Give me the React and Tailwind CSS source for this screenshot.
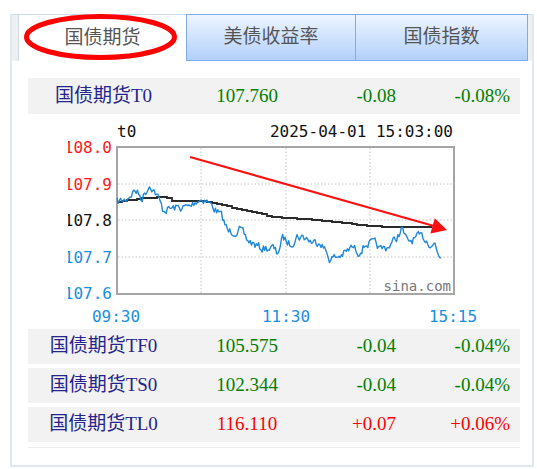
import React from 'react';

const quotes = [
  { name: '国债期货TF0', price: '105.575', change: '-0.04', pct: '-0.04%', up: false },
  { name: '国债期货TS0', price: '102.344', change: '-0.04', pct: '-0.04%', up: false },
  { name: '国债期货TL0', price: '116.110', change: '+0.07', pct: '+0.06%', up: true },
];

const priceKeys = [
  [117, 202], [125, 200], [135, 190], [142, 198], [150, 184], [157, 195], [163, 210],
  [175, 208], [190, 207], [197, 200], [205, 199], [213, 207], [222, 217], [228, 232],
  [240, 230], [247, 240], [260, 248], [273, 248], [277, 254], [283, 238], [290, 244],
  [297, 236], [307, 238], [313, 243], [320, 240], [325, 250], [330, 259], [337, 257],
  [347, 252], [352, 247], [358, 252], [367, 243], [377, 245], [380, 250], [387, 247],
  [395, 240], [402, 229], [407, 242], [417, 238], [423, 237], [430, 243], [435, 244],
  [438, 255], [441, 256],
];

const avgKeys = [
  [117, 202], [130, 200], [145, 198], [160, 197], [170, 198], [172, 201], [200, 201],
  [215, 203], [227, 206], [240, 210], [260, 214], [273, 217], [300, 219], [317, 220],
  [347, 223], [367, 226], [390, 227], [436, 227],
];

function lerp(keys, x) {
  for (let i = 1; i < keys.length; i++) {
    const [x0, y0] = keys[i - 1];
    const [x1, y1] = keys[i];
    if (x <= x1) return y0 + ((y1 - y0) * (x - x0)) / (x1 - x0);
  }
  return keys[keys.length - 1][1];
}

// jittery minute line built from the key points
function pricePoints() {
  let seed = 7;
  const rand = () => {
    seed = (seed * 16807) % 2147483647;
    return seed / 2147483647;
  };
  const pts = [];
  let w = 0;
  for (let x = 117; x <= 441; x += 1.2) {
    w = w * 0.45 + (rand() - 0.5) * 8;
    pts.push(`${x.toFixed(1)},${(lerp(priceKeys, x) + w).toFixed(1)}`);
  }
  return pts.join(' ');
}

function avgPoints() {
  const pts = [];
  let prev = null;
  for (let x = 117; x <= 436; x += 5) {
    const y = Math.round(lerp(avgKeys, x));
    if (prev !== null && prev !== y) pts.push(`${x},${prev}`);
    pts.push(`${x},${y}`);
    prev = y;
  }
  return pts.join(' ');
}

const mono = { fontFamily: '"DejaVu Sans Mono", monospace', fontSize: 16 };

function Chart() {
  const hLines = [184, 220, 257];
  const vLines = [201, 286, 370];
  const yLabels = [
    ['108.0', 147, '#ff1a1a'],
    ['107.9', 184, '#ff1a1a'],
    ['107.8', 220, '#111'],
    ['107.7', 257, '#1a8ee0'],
    ['107.6', 293, '#1a8ee0'],
  ];
  return (
    <svg width="492" height="215" viewBox="28 114 492 215" className="block">
      <defs>
        <clipPath id="ylab">
          <rect x="68" y="114" width="60" height="215" />
        </clipPath>
      </defs>
      <text x="117" y="137" style={mono} fill="#111">t0</text>
      <text x="453" y="137" textAnchor="end" style={mono} fill="#111">2025-04-01 15:03:00</text>

      <g stroke="#c4c4c4" strokeWidth="1" strokeDasharray="1.5 2">
        {hLines.map((y) => (
          <line key={y} x1="118" y1={y} x2="453" y2={y} />
        ))}
        {vLines.map((x) => (
          <line key={x} x1={x} y1="148" x2={x} y2="293" />
        ))}
      </g>
      <rect x="117" y="147" width="337" height="147" fill="none" stroke="#a6a6a6" strokeWidth="2" />

      <g clipPath="url(#ylab)">
        {yLabels.map(([t, y, c]) => (
          <text key={t} x="112" y={y + 6} textAnchor="end" style={mono} fill={c}>{t}</text>
        ))}
      </g>

      <polyline points={avgPoints()} fill="none" stroke="#2b2b2b" strokeWidth="1.8" />
      <polyline points={pricePoints()} fill="none" stroke="#1f88d9" strokeWidth="1.4" strokeLinejoin="round" />

      <text x="451" y="291" textAnchor="end" fill="#777" style={{ ...mono, fontSize: 14 }}>sina.com</text>

      <line x1="190" y1="157" x2="434" y2="226" stroke="#ff1010" strokeWidth="2" />
      <polygon points="447,230 430.4,233.6 434.8,218.2" fill="#ff1010" />

      <g style={mono} fill="#1a8ee0">
        <text x="116" y="322" textAnchor="middle">09:30</text>
        <text x="286" y="322" textAnchor="middle">11:30</text>
        <text x="453" y="322" textAnchor="middle">15:15</text>
      </g>
    </svg>
  );
}

function QuoteRow({ name, price, change, pct, up, className = '' }) {
  const tone = up ? 'text-[#ff0000]' : 'text-[#008000]';
  return (
    <div className={`grid grid-cols-[151px_136px_81px_114px] items-center bg-[#f2f2f2] h-[35px] ${className}`}>
      <span className="text-center text-[#24248c]">{name}</span>
      <span className={`text-center ${tone}`}>{price}</span>
      <span className={`text-right ${tone}`}>{change}</span>
      <span className={`text-right ${tone}`}>{pct}</span>
    </div>
  );
}

export default function App() {
  return (
    <div
      className="w-[537px] h-[469px] bg-white pt-[14px] pl-[10px] overflow-hidden"
      style={{ fontFamily: '"Liberation Serif", "Noto Sans CJK SC", serif' }}
    >
      <div className="w-[524px] h-[453px] border-x-2 border-b-2 border-[#dfe7f1] flex flex-col">
        {/* tab strip */}
        <div className="flex h-[47px] bg-[#f0f0f0] border-t border-[#d3deec] pl-[6px] pr-[4px] text-[19px] text-[#555]">
          <div className="relative w-[168px] -mt-px bg-white border-t border-l border-[#cfdbe9] flex items-center justify-center">
            国债期货
            <svg className="absolute left-[3px] top-[-1px]" width="160" height="48" viewBox="0 0 160 48">
              <ellipse cx="78.5" cy="23" rx="74" ry="20.5" fill="none" stroke="#ff0000" strokeWidth="5" />
            </svg>
          </div>
          <div className="w-[170px] -mt-px border border-[#7eaaee] bg-linear-to-b from-[#eef5ff] to-[#b2d0fb] flex items-center justify-center">
            美债收益率
          </div>
          <div className="w-[172px] -mt-px border border-l-0 border-[#7eaaee] bg-linear-to-b from-[#eef5ff] to-[#b2d0fb] flex items-center justify-center">
            国债指数
          </div>
        </div>

        <div className="pt-[17px] pl-[16px] text-[19px]">
          <div className="w-[492px]">
            <QuoteRow name="国债期货T0" price="107.760" change="-0.08" pct="-0.08%" up={false} className="h-[36px]" />
            <Chart />
            <div className="flex flex-col gap-[4px]">
              {quotes.map((q) => (
                <QuoteRow key={q.name} {...q} />
              ))}
            </div>
            <div className="mt-[5px] h-px bg-[#ececec]" />
          </div>
        </div>
      </div>
    </div>
  );
}
